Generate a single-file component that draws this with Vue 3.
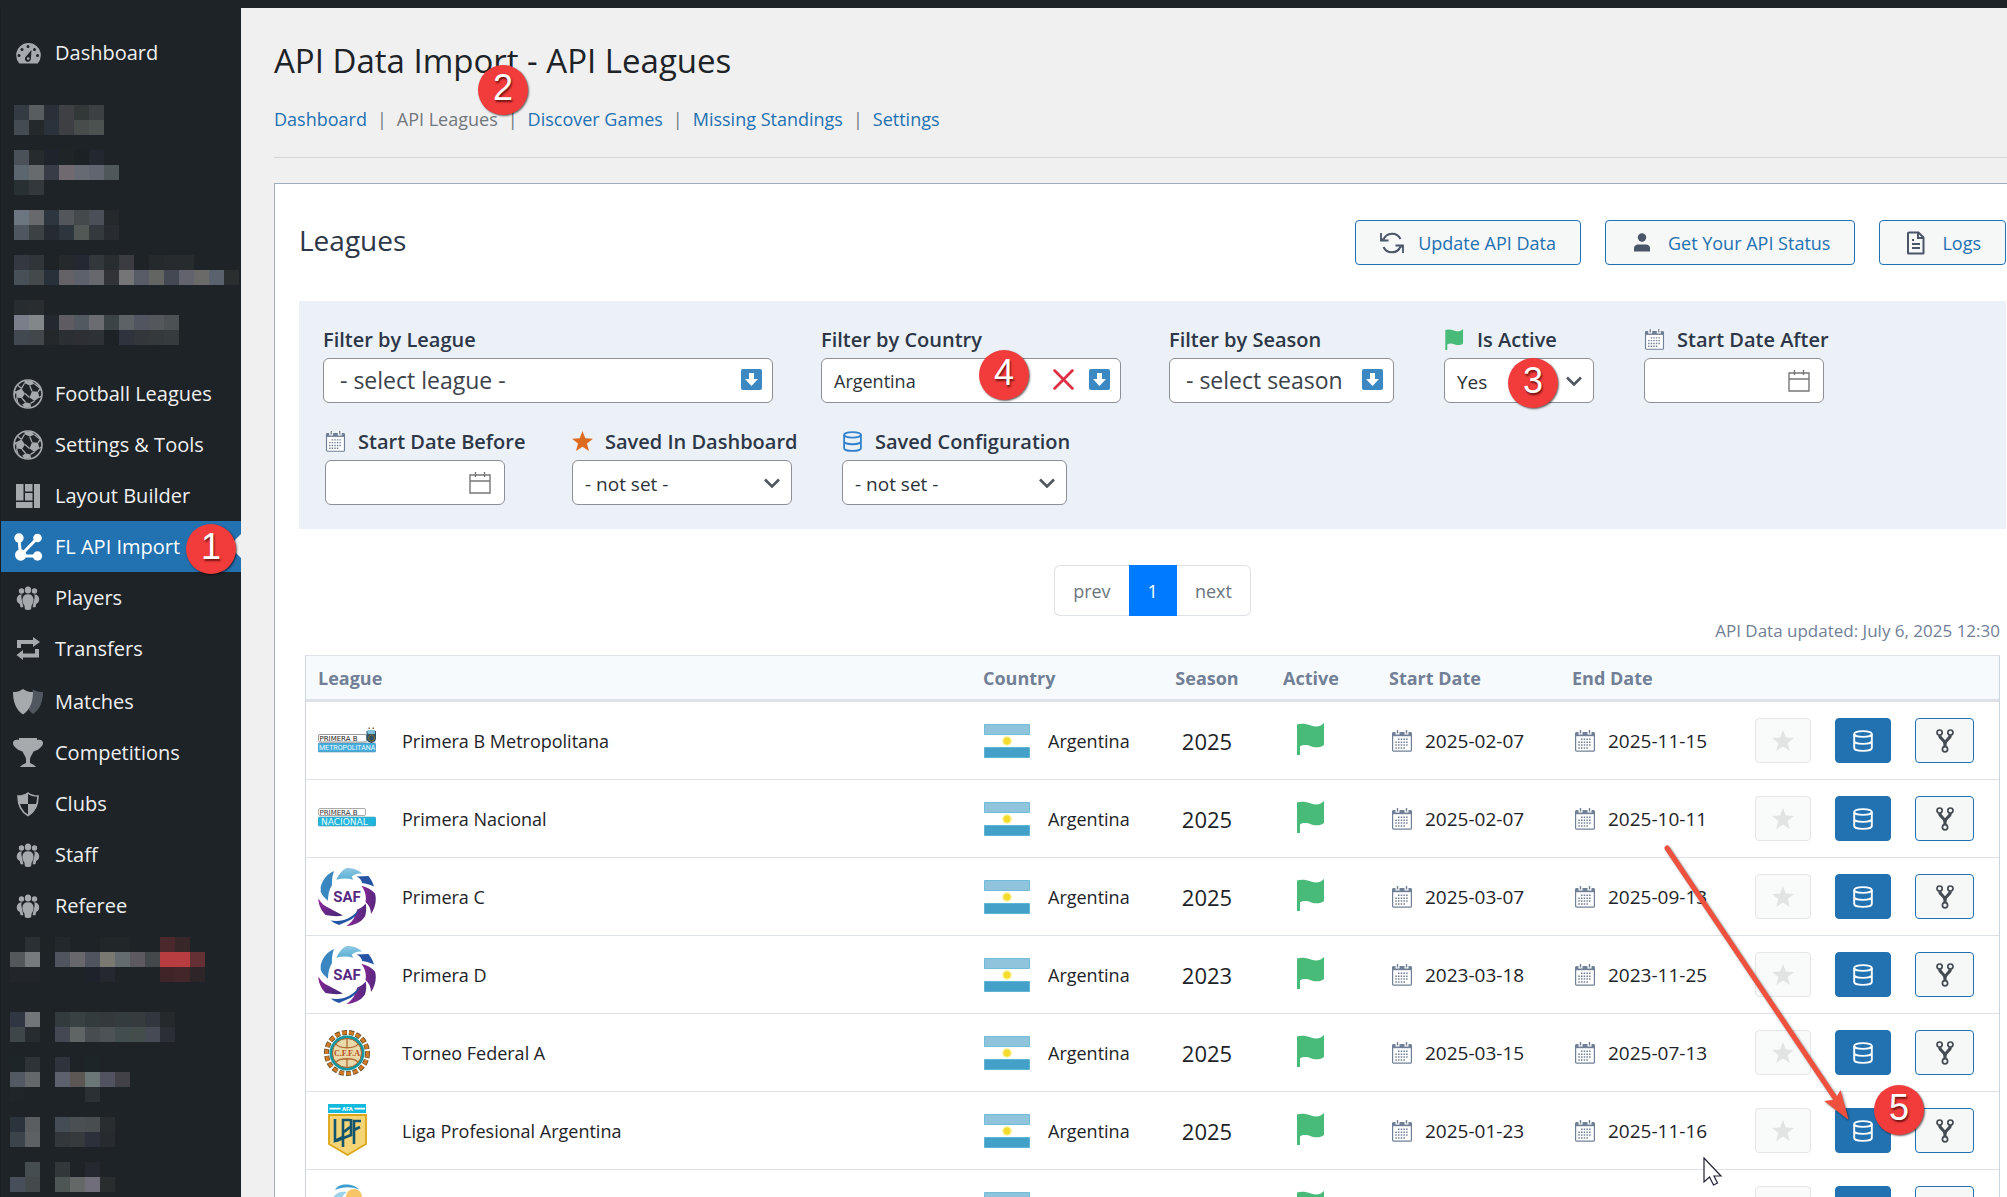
<template>
  <div class="page">
    <svg class="sprite" aria-hidden="true">
      <defs>
        <linearGradient id="g-sky" x1="0" y1="0" x2="0" y2="1">
          <stop offset="0" stop-color="#8fc9e3" />
          <stop offset="1" stop-color="#59aed4" />
        </linearGradient>
        <linearGradient id="g-purple" x1="0" y1="0" x2="1" y2="0">
          <stop offset="0" stop-color="#8a2797" />
          <stop offset="1" stop-color="#55287f" />
        </linearGradient>
        <linearGradient id="g-purple-rev" x1="0" y1="0" x2="1" y2="1">
          <stop offset="0" stop-color="#94249b" />
          <stop offset="1" stop-color="#3f2a76" />
        </linearGradient>
      </defs>

      <symbol id="i-dashboard" viewBox="0 0 30 30">
        <path fill="currentColor" d="M6.300 25.500A12.300 12.300 0 1 1 24.700 25.500Z" />
        <g fill="#1d2327">
          <circle cx="6" cy="17.500" r="1.500" /><circle cx="9" cy="11.500" r="1.500" />
          <circle cx="15" cy="8.500" r="1.500" /><circle cx="21.500" cy="11.500" r="1.500" />
          <circle cx="24.500" cy="17.500" r="1.500" />
          <path d="M18.500 12l-.6 8.600a3 3 0 1 1-4.700-2.300z" />
        </g>
        <circle cx="15.200" cy="20.600" r="1.300" fill="currentColor" />
      </symbol>
      <symbol id="i-ball" viewBox="0 0 30 30">
        <circle cx="15" cy="15" r="14" fill="none" stroke="currentColor" stroke-width="1.600" />
        <g fill="currentColor">
          <path d="M8.500 9.500l3.500 5-3 4.800-5.500-.8L3 12.300z" />
          <path d="M19 12.200l6 .6 1.300 5.700-4.800 3.500-5-3.600z" />
          <path d="M11.500 1.600L19 2l2.500 2.800-4.800 1.700-5.200-2.200z" />
          <path d="M12.500 23.200l5 1.200.5 4.200-6.500-.4-2.300-2.400z" />
          <path d="M4 21.500l3.500 4.800-3.800-3.600zM27.500 8l1.300 5.200-1.800-2.700z" />
        </g>
        <path fill="none" stroke="currentColor" stroke-width="1.300" d="M8.500 9.500l3-5.200M16.700 6.500l2.300 5.700M12 14.500l4.500 3.900M9 19.300l3.500 3.900M21.500 22l-4 2.400M25 12.800l2.300-3.500M21.500 4.800l6 4.700M3 12.300L1.200 16M3.500 18.500l1 4M26.300 18.500l1.900-1.500M8.500 9.500L5 6.500" />
      </symbol>
      <symbol id="i-layout" viewBox="0 0 30 30">
        <path fill="currentColor" d="M3 3h7.500v16.500H3zM12 3h7.500v7.500H12zM12 12h7.500v7.500H12zM21 3h6v24h-6zM3 21h16.500v6H3z" />
      </symbol>
      <symbol id="i-network" viewBox="0 0 30 30">
        <path fill="none" stroke="currentColor" stroke-width="3" d="M6 6.500l1.500 17M7.500 23.500L24 6.500M7.500 24H24" />
        <g fill="currentColor">
          <circle cx="6" cy="6" r="4.700" /><circle cx="24.500" cy="6" r="4.300" />
          <circle cx="7.700" cy="23" r="5.700" /><circle cx="24.500" cy="24" r="4.700" />
        </g>
      </symbol>
      <symbol id="i-groups" viewBox="0 0 30 30">
        <g fill="currentColor">
          <circle cx="8.500" cy="8" r="2.700" /><circle cx="21.500" cy="8" r="2.700" />
          <ellipse cx="15" cy="7" rx="3.200" ry="3.600" />
          <path d="M9.600 11.600C7 12 9 17 10.400 24.300H7.500L6.800 21c-5-2-3.300-9.500 1.200-9.500zM20.400 11.600c2.600.4.600 5.400-.8 12.700h2.900l.7-3.300c5-2 3.300-9.500-1.200-9.500z" />
          <path d="M15 11.300c7 0 6.500 8 3.600 11.200l-.5 3.800c-1.400 1-4.800 1-6.200 0l-.5-3.800C8.500 19.300 8 11.300 15 11.300z" />
        </g>
      </symbol>
      <symbol id="i-transfers" viewBox="0 0 30 30">
        <path fill="currentColor" d="M4 14V6h16V3l7 5-7 5v-3H8v4zM26 15v8.500H10V26l-6.500-5L10 16v3.500h12V15z" />
      </symbol>
      <symbol id="i-matches" viewBox="0 0 30 30">
        <path fill="#50575e" d="M20 2.500c3.500 2.200 6.500 2.500 10 2.500 0 9-2.500 17-10 22-2-1.500-3.500-3-4.500-5z" />
        <path fill="currentColor" d="M10 2c3.500 2.500 6.500 3 10 3 0 9-2.500 17.500-10 22.500C2.500 22.500 0 14 0 5c3.500 0 6.500-.5 10-3z" />
      </symbol>
      <symbol id="i-cup" viewBox="0 0 30 30">
        <path fill="currentColor" d="M6 0h18v2c3-1 6 0 6 3s-4 7-9.500 8.500C19 17 17.500 18 17 21v4c2 1 5 2 6 4H7c1-2 4-3 6-4v-4c-.5-3-2-4-3.500-7.500C4 12 0 8 0 5s3-4 6-3z" />
      </symbol>
      <symbol id="i-shield" viewBox="0 0 30 30">
        <path fill="none" stroke="currentColor" stroke-width="1.600" d="M15 4c3 2.500 6 3 10 3 0 7-2 15-10 19.500C7 22 5 14 5 7c4 0 7-.5 10-3z" />
        <path fill="currentColor" d="M15 4v11H6C5.200 12 5 9 5 7c4 0 7-.5 10-3zM15 15h9.200c-1 4.500-3.600 8.800-9.200 11.500z" />
      </symbol>

      <symbol id="i-calendar" viewBox="0 0 22 22">
        <rect x="1.600" y="2.600" width="18.800" height="18.600" rx="1" fill="#fff" stroke="#718096" stroke-width="1.200" />
        <path fill="#718096" d="M1.600 2.600h18.800v3.600H1.600z" />
        <path fill="#fff" d="M4.500 0h4v4.600h-4zM13.500 0h4v4.600h-4z" />
        <path fill="#718096" d="M5.800 0h1.400v3.600H5.800zM14.800 0h1.400v3.600h-1.400z" />
        <path fill="none" stroke="#718096" stroke-width="1.500" stroke-dasharray="1.500 1.200" d="M7 9.300h10.500M4.300 12.200h13.500M4.300 15.100h13.500M4.300 18h10.500" />
      </symbol>
      <symbol id="i-flag" viewBox="0 0 28 32">
        <path fill="#48bb78" d="M0 1.500C4 0 9 .5 14 2.500c5 1.800 9 1.500 13-2.500v22c-3 2.500-8 3-12.500 1.500C10 21.800 6 21.500 3 23.500V32H0z" />
      </symbol>
      <symbol id="i-star" viewBox="0 0 22 22">
        <path fill="currentColor" d="M11 0l2.900 7.600 8.100.4-6.300 5.100L17.800 21 11 16.600 4.200 21l2.100-7.900L0 8l8.100-.4z" />
      </symbol>
      <symbol id="i-db" viewBox="0 0 20 22">
        <g fill="none" stroke="currentColor" stroke-width="1.900">
          <ellipse cx="10" cy="4" rx="8.800" ry="2.900" />
          <path d="M1.200 4v14c0 1.600 3.900 2.900 8.800 2.900s8.800-1.300 8.800-2.900V4M1.200 11c0 1.600 3.900 2.900 8.800 2.900s8.800-1.300 8.800-2.900" />
        </g>
      </symbol>
      <symbol id="i-fork" viewBox="0 0 18 24">
        <path fill="none" stroke="currentColor" stroke-width="3.200" d="M3.600 6.500c.5 4 5.400 4 5.400 8.500v2M14.400 6.500c-.5 4-5.400 4-5.400 8.500" />
        <g fill="#f6f7f7" stroke="currentColor" stroke-width="1.700">
          <circle cx="3.600" cy="3.600" r="2.600" /><circle cx="14.400" cy="3.600" r="2.600" /><circle cx="9" cy="20.300" r="2.600" />
        </g>
      </symbol>
      <symbol id="i-refresh" viewBox="0 0 24 24">
        <path fill="none" stroke="currentColor" stroke-width="2" d="M3.500 8.500A9.300 9.300 0 0 1 20.500 8M20.500 15.500A9.300 9.300 0 0 1 3.500 16" />
        <path fill="none" stroke="currentColor" stroke-width="1.800" d="M1 2v7.500h7.500M23 22v-7.500h-7.500" />
        <path fill="currentColor" d="M1 6l3.500 3.500H1zM23 18l-3.500-3.500H23z" />
      </symbol>
      <symbol id="i-user" viewBox="0 0 24 24">
        <circle cx="12" cy="6.500" r="4.200" fill="currentColor" />
        <path fill="currentColor" d="M4 20.500V17c0-2 2-3.500 4-3.500h8c2 0 4 1.500 4 3.500v3.500z" />
      </symbol>
      <symbol id="i-file" viewBox="0 0 24 24">
        <path fill="none" stroke="currentColor" stroke-width="2" d="M5 1.500h9.500l5 5V22q0 .5-.5.500H4.500Q4 22.500 4 22V2.500q0-1 1-1zM14 1.500V7h5.500" />
        <path stroke="currentColor" stroke-width="2" d="M8 9h2M8 13h8M8 17h8" />
      </symbol>
      <symbol id="i-down" viewBox="0 0 21 21">
        <rect width="21" height="21" rx="2" fill="#3b88c3" />
        <path fill="#fff" d="M8 4h5v6h4l-6.500 7L4 10h4z" />
      </symbol>
      <symbol id="i-clear" viewBox="0 0 20 20">
        <path fill="none" stroke="#dd2e44" stroke-width="2.600" stroke-linecap="round" d="M1.500 1.500l17 17M18.500 1.500l-17 17" />
      </symbol>
      <symbol id="i-chevron" viewBox="0 0 16 10">
        <path fill="none" stroke="#50575e" stroke-width="2.600" d="M1 1.500l7 7 7-7" />
      </symbol>
      <symbol id="i-picker" viewBox="0 0 22 22">
        <path fill="none" stroke="#777" stroke-width="1.400" d="M1 3h20v18H1zM1 9h20M6.500 0v5M15.500 0v5" />
      </symbol>

      <symbol id="flag-ar" viewBox="0 0 46 34">
        <path fill="#fff" d="M0 0h46v34H0z" />
        <path fill="#90c3dc" stroke="#71bcd6" d="M.5.5h45v10H.500z" />
        <path fill="#43a0c8" stroke="#5eb4d3" d="M.5 23.500h45v10H.500z" />
        <circle cx="23" cy="17" r="5" fill="#fbf3a5" />
        <circle cx="23" cy="17" r="3.500" fill="#f5dc2c" />
      </symbol>
    </svg>

    <div class="topbar"></div>

    <div class="body">
      <aside class="sidebar">
        <ul class="menu">
          <li><a href="#" class="menu-item"><svg class="menu-icon"><use href="#i-dashboard" /></svg>Dashboard</a></li>
        </ul>
        <svg class="mosaic mosaic-top" width="225" height="240">
          <rect v-for="c in topCells" :key="c.key" :x="c.x" :y="c.y" width="15" height="15" :fill="c.fill" />
        </svg>
        <ul v-for="(group, g) in menu" :key="g" class="menu">
          <li v-for="item in group" :key="item.label">
            <a href="#" class="menu-item" :class="{ current: item.current }">
              <svg class="menu-icon"><use :href="'#i-' + item.icon" /></svg>{{ item.label }}
            </a>
          </li>
        </ul>
        <svg class="mosaic mosaic-bottom" width="195" height="255">
          <rect v-for="c in bottomCells" :key="c.key" :x="c.x" :y="c.y" width="15" height="15" :fill="c.fill" />
        </svg>
      </aside>

      <main class="content">
        <h1>API Data Import - API Leagues</h1>
        <nav class="subnav">
          <template v-for="(link, i) in links" :key="link">
            <span v-if="i" class="sep">|</span>
            <a href="#" :class="{ active: link === 'API Leagues' }">{{ link }}</a>
          </template>
        </nav>
        <hr>

        <section class="panel">
          <header class="panel-head">
            <h2>Leagues</h2>
            <div class="actions">
              <button class="btn"><svg class="btn-icon"><use href="#i-refresh" /></svg>Update API Data</button>
              <button class="btn"><svg class="btn-icon"><use href="#i-user" /></svg>Get Your API Status</button>
              <button class="btn"><svg class="btn-icon"><use href="#i-file" /></svg>Logs</button>
            </div>
          </header>

          <form class="filters" @submit.prevent>
            <div class="field w-league">
              <label for="league">Filter by League</label>
              <div class="control">
                <input id="league" class="combo" type="text" placeholder="- select league -">
                <button type="button" class="open" aria-label="Open"><svg><use href="#i-down" /></svg></button>
              </div>
            </div>
            <div class="field w-country">
              <label for="country">Filter by Country</label>
              <div class="control">
                <input id="country" v-model="country" class="combo chosen" type="text">
                <button type="button" class="clear" aria-label="Clear" @click="country = ''"><svg><use href="#i-clear" /></svg></button>
                <button type="button" class="open" aria-label="Open"><svg><use href="#i-down" /></svg></button>
              </div>
            </div>
            <div class="field w-season">
              <label for="season">Filter by Season</label>
              <div class="control">
                <input id="season" class="combo" type="text" placeholder="- select season">
                <button type="button" class="open" aria-label="Open"><svg><use href="#i-down" /></svg></button>
              </div>
            </div>
            <div class="field w-active has-icon">
              <label for="active"><svg class="label-icon"><use href="#i-flag" /></svg>Is Active</label>
              <div class="control">
                <select id="active"><option>Yes</option><option>No</option></select>
                <svg class="chevron"><use href="#i-chevron" /></svg>
              </div>
            </div>
            <div class="field w-after has-icon">
              <label for="after"><svg class="label-icon"><use href="#i-calendar" /></svg>Start Date After</label>
              <div class="control date">
                <input id="after" type="text">
                <svg class="picker"><use href="#i-picker" /></svg>
              </div>
            </div>
            <div class="field w-before has-icon">
              <label for="before"><svg class="label-icon"><use href="#i-calendar" /></svg>Start Date Before</label>
              <div class="control date">
                <input id="before" type="text">
                <svg class="picker"><use href="#i-picker" /></svg>
              </div>
            </div>
            <div class="field w-saved has-icon">
              <label for="saved"><svg class="label-icon orange"><use href="#i-star" /></svg>Saved In Dashboard</label>
              <div class="control">
                <select id="saved"><option>- not set -</option></select>
                <svg class="chevron"><use href="#i-chevron" /></svg>
              </div>
            </div>
            <div class="field w-config has-icon">
              <label for="config"><svg class="label-icon blue"><use href="#i-db" /></svg>Saved Configuration</label>
              <div class="control">
                <select id="config"><option>- not set -</option></select>
                <svg class="chevron"><use href="#i-chevron" /></svg>
              </div>
            </div>
          </form>

          <div class="pagination">
            <button>prev</button>
            <button class="on">1</button>
            <button>next</button>
          </div>

          <div class="updated">API Data updated: July 6, 2025 12:30</div>

          <table class="leagues">
            <colgroup>
              <col>
              <col class="c-country">
              <col class="c-season">
              <col class="c-active">
              <col class="c-date">
              <col class="c-date">
              <col class="c-tools">
            </colgroup>
            <thead>
              <tr>
                <th>League</th>
                <th>Country</th>
                <th class="center">Season</th>
                <th class="center">Active</th>
                <th>Start Date</th>
                <th>End Date</th>
                <th></th>
              </tr>
            </thead>
            <tbody>
              <tr v-for="row in rows" :key="row.name">
                <td>
                  <div class="cell league">
                    <svg class="logo" viewBox="0 0 58 58">
                      <g v-if="row.logo === 'metro'">
                        <rect x=".5" y="22.500" width="48" height="7.500" rx="1.500" fill="#fff" stroke="#999" />
                        <text x="1.500" y="29" class="wide" font-size="7" fill="#222">PRIMERA B</text>
                        <rect x="0" y="31" width="58" height="9" rx="1.500" fill="#45addb" stroke="#5a8fa8" stroke-width=".6" />
                        <text x="1" y="38.200" class="narrow" font-size="7" fill="#e9f7fd">METROPOLITANA</text>
                        <path fill="#2c5065" d="M48.500 19h9.500v8c0 2-2 3-4.700 4-2.800-1-4.800-2-4.800-4z" />
                        <path fill="#7fc0dd" d="M49.500 18h7.500v4h-7.500z" />
                        <circle cx="53.500" cy="26" r="3" fill="none" stroke="#8d6f33" />
                        <path fill="#8a6a3a" d="M50.500 15.500h1.500V17h-1.500zM54.500 15.500h1.500V17h-1.500z" />
                      </g>
                      <g v-else-if="row.logo === 'nacional'">
                        <rect x=".5" y="18.500" width="47" height="7" rx="1.500" fill="#fff" stroke="#aaa" />
                        <text x="1.500" y="24.600" class="wide" font-size="7" fill="#333">PRIMERA B</text>
                        <rect x="0" y="27" width="58" height="9" rx="1.500" fill="#1fb5dc" stroke="#5a9db0" stroke-width=".6" />
                        <text x="3" y="34.500" class="wide" font-size="9" fill="#e9f9fe">NACIONAL</text>
                      </g>
                      <g v-else-if="row.logo === 'saf'">
                        <path fill="url(#g-sky)" d="M18.300 11.700C21 6 24 2 28.700 0c5 0 10.500 1 15.500 5.500-4 0-7.500.5-10.500 3l1.500 3.200c-6-1.500-11-1.500-16.900 0z" />
                        <path fill="#2653a3" d="M38.500 8.500l12-.5c2.500 3 4.500 7 5.500 10.500-4-2-8-3-12-3.500 0-2.500-2-5-5.500-6.500z" />
                        <path fill="url(#g-purple)" d="M43.300 17.800C49 19 54 22 57 25.500c2 7 0 15-4 20.500 0-5-2-9-5.500-12 1-5 0-11-4.200-16.200z" />
                        <path fill="url(#g-purple)" d="M47.700 35.500c1 5 .5 9-.7 13-4 6-11 9-18.700 9.500 3-2 5.500-4 7.500-7.500l3.500-9c3-1 6-3 8.400-6z" />
                        <path fill="#2455a4" d="M12.700 52.500c4 .8 9 .5 13.300-.5 6-2 11-6 16-11-3 6-7 10-12 12l-9 4q-4-1-8.300-4.500z" />
                        <path fill="url(#g-purple-rev)" d="M.3 30.500C3 35 6 38 11 40l14 7.600c-6 1-12 .5-17.500-.6C3 42 .5 37 .3 30.500z" />
                        <path fill="#3a86c0" d="M2.700 19C5 11 9 6 16 3c-1.500 4-2.500 9-2 14-3 5-4 10-4 15.700-3-2.500-6-5-7.300-9z" />
                        <text x="29" y="34" class="narrow mid bold" font-size="15" fill="#55297f">SAF</text>
                      </g>
                      <g v-else-if="row.logo === 'cffa'">
                        <circle cx="29" cy="29" r="20.500" fill="none" stroke="#5d4a2c" stroke-width="5" stroke-dasharray="5 2" />
                        <circle cx="29" cy="29" r="20.500" fill="none" stroke="#d07a25" stroke-width="3.400" stroke-dasharray="4.600 2.400" />
                        <circle cx="29" cy="29" r="17.500" fill="#16979f" />
                        <circle cx="29" cy="29" r="14.500" fill="#ead9a8" stroke="#a5602c" stroke-width="1" />
                        <path fill="none" stroke="#b06a35" stroke-width="1.300" d="M29 14.500v9M29 34.500v9M18 20c3 5 19 5 22 0M18 38.500c3-5 19-5 22 0" />
                        <text x="29" y="32" class="slab mid bold" font-size="8" fill="#b5501f">C.F.F.A</text>
                      </g>
                      <g v-else-if="row.logo === 'lpf'">
                        <path fill="#14bade" d="M10 2h38v9H10z" />
                        <path fill="#fff" d="M11.500 5.700h11v1.800h-11zM36.500 5.700H47v1.800H36.500z" />
                        <text x="29.500" y="9" class="narrow mid bold" font-size="6" fill="#fff">AFA</text>
                        <path fill="#f5d476" stroke="#dba617" stroke-width="1.800" d="M11 13h37v29l-18.500 11L11 42z" />
                        <path fill="none" stroke="#14556e" stroke-width="2.600" d="M17 17v22l8-4M25 45V18h7M33 17v16l-15 6M26 30l6-5M36 42V19h7M36 28l6-3" />
                      </g>
                      <g v-else>
                        <path fill="#3a9fd0" d="M17 10C19 5 25 4 30 4.500c5 .5 10 3 11 5-8-3-16-3-24 .5z" />
                        <path fill="#9cd2ea" d="M14 20c3-8 10-9 15-8-5 3-8 10-8 20-5-3-8-8-7-12z" />
                        <circle cx="36" cy="17" r="8" fill="#f7c566" />
                        <path fill="#3a9fd0" d="M16 30c8 12 22 12 28 0-2 16-24 18-28 0z" />
                      </g>
                    </svg>
                    {{ row.name }}
                  </div>
                </td>
                <td>
                  <div class="cell country"><svg class="flag"><use href="#flag-ar" /></svg>Argentina</div>
                </td>
                <td class="center year">{{ row.season }}</td>
                <td class="center"><svg class="active-flag"><use href="#i-flag" /></svg></td>
                <td>
                  <div class="cell date-cell"><svg class="cal"><use href="#i-calendar" /></svg>{{ row.start }}</div>
                </td>
                <td>
                  <div class="cell date-cell"><svg class="cal"><use href="#i-calendar" /></svg>{{ row.end }}</div>
                </td>
                <td>
                  <div class="cell tools">
                    <button class="tool star" disabled aria-label="Save"><svg><use href="#i-star" /></svg></button>
                    <button class="tool db" aria-label="Configure"><svg><use href="#i-db" /></svg></button>
                    <button class="tool fork" aria-label="Map"><svg><use href="#i-fork" /></svg></button>
                  </div>
                </td>
              </tr>
            </tbody>
          </table>
        </section>
      </main>
    </div>

    <!-- numbered steps, arrow and pointer over the page -->
    <div class="marks">
      <svg class="arrow" width="190" height="275" viewBox="0 0 190 275">
        <path class="shaft" d="M4 4L172 254" />
        <path class="head" d="M183 272L177 250l-4 7-8 1z" />
      </svg>
      <svg class="cursor" width="20" height="30" viewBox="0 0 20 30">
        <path fill="#fff" stroke="#223" stroke-width="1.200" d="M1 1v24l5.500-5 4 8 4-2-3.500-7h7z" />
      </svg>
      <span v-for="n in 5" :key="n" class="step" :class="'step-' + n">{{ n }}</span>
    </div>
  </div>
</template>

<script setup>
import { ref } from 'vue';

const country = ref('Argentina');

const links = ['Dashboard', 'API Leagues', 'Discover Games', 'Missing Standings', 'Settings'];

const menu = [
  [
    { label: 'Football Leagues', icon: 'ball' },
    { label: 'Settings & Tools', icon: 'ball' },
    { label: 'Layout Builder', icon: 'layout' },
    { label: 'FL API Import', icon: 'network', current: true },
    { label: 'Players', icon: 'groups' },
    { label: 'Transfers', icon: 'transfers' }
  ],
  [
    { label: 'Matches', icon: 'matches' },
    { label: 'Competitions', icon: 'cup' },
    { label: 'Clubs', icon: 'shield' },
    { label: 'Staff', icon: 'groups' },
    { label: 'Referee', icon: 'groups' }
  ]
];

const rows = [
  { name: 'Primera B Metropolitana', logo: 'metro', season: 2025, start: '2025-02-07', end: '2025-11-15' },
  { name: 'Primera Nacional', logo: 'nacional', season: 2025, start: '2025-02-07', end: '2025-10-11' },
  { name: 'Primera C', logo: 'saf', season: 2025, start: '2025-03-07', end: '2025-09-13' },
  { name: 'Primera D', logo: 'saf', season: 2023, start: '2023-03-18', end: '2023-11-25' },
  { name: 'Torneo Federal A', logo: 'cffa', season: 2025, start: '2025-03-15', end: '2025-07-13' },
  { name: 'Liga Profesional Argentina', logo: 'lpf', season: 2025, start: '2025-01-23', end: '2025-11-16' },
  { name: 'Copa Argentina', logo: 'copa', season: 2025, start: '2025-01-15', end: '2025-11-30' }
];

// one string per 15px row, "." leaves a cell empty
const toCells = (lines) => lines.flatMap((line, y) =>
  line.split(' ').map((c, x) => ({ key: x + '-' + y, x: x * 15, y: y * 15, fill: '#' + c }))
).filter((c) => /^#\w{6}$/.test(c.fill));

const topCells = toCells([
  '343b42 585e60 2a2f38 3e4043 323738 3c4042',
  '444c52 24292b 2a323b 3d3f42 484c4b 4c5250',
  '',
  '4a5158 262b2d 1e232c 1f2427 1c2125 23272f',
  '5c666f 686b6d 383c47 706a70 666a73 60656f 50575a',
  '293033 33383c',
  '',
  '6b7681 67696d 2d353f 53565b 444a4b 4b4f58 25292c',
  '4e575f 3c4144 252a33 2c363c 525856 34393e 282b2f',
  '',
  '343941 303539 . 25292b 242833 32373b 292d30 3a3c41 . 25292b 282b2d 282b2d',
  '485057 444a4c 28313a 646167 5c616b 67686d 313339 757476 575c66 636563 434852 62636d 6a6a69 5a636d 2a2e2e',
  '',
  '262c2f 292d30',
  '7a7e8b 828789 24292f 5e5c62 525960 6b6c72 3c4347 5c6265 505560 54585d 4c5254',
  '434950 42474b 24282b 2b2f33 2d2f35 2e3237 1d2226 2e333d 33363b 34393c 363b3d'
]);

const bottomCells = toCells([
  '. 2b3034 1e2326 23282c . . 212629 212629 . . 4b282b 382729',
  '54585b 787b7d . 50545f 67676c 50545f 797972 646c6f 5d5960 44484b b83d40 b83d40 653033',
  '22262a 22262a . . . 1e222b 25282e . . . 402528 42262a 2e2528',
  '',
  '',
  '303742 727678 1e2326 343b3e 3a4143 343b3c 34393b 343c3f 363c3e 32363f 25292c',
  '3f464a 272c30 . 444853 5f6564 464c50 4d5256 424d50 434d4b 464a55 2b2e34',
  '',
  '1e2528 2e3337 . 2e333c . 1d2529',
  '525963 64686b . 5d616e 5c5654 6b7677 525361 424147',
  '202529 . . . . 2b3035',
  '. 1e2327',
  '2b343c 5a5e61 . 444d56 4a4f54 484d50 2a2d30',
  '3b444a 5e6164 . 32373b 363a3c 2b303a 272b2f',
  '',
  '. 454d50 . 32373a . 26282f',
  '464f5a 44494c . 4e5655 646968 6f6e7a 2a2d2e'
]);
</script>

<style>
body {
  background: #f0f0f1;
}
</style>

<style scoped>
.page {
  position: relative;
  height: 100vh;
  overflow: hidden;
  display: flex;
  flex-direction: column;
  font-family: "Open Sans", "Noto Sans", sans-serif;
  font-size: 18px;
  color: #1d2327;
  background: #f0f0f1;
}
.page *, .page *::before, .page *::after {
  box-sizing: border-box;
}
.sprite {
  position: absolute;
  width: 0; height: 0;
}
button, input, select {
  font: inherit;
  color: inherit;
  margin: 0;
}
.topbar {
  height: 8px;
  flex: none;
  background: #1d2327;
}
.body {
  flex: 1;
  min-height: 0;
  display: flex;
}

/* sidebar */
.sidebar {
  width: 241px;
  flex: none;
  padding-top: 19px;
  background: #1d2327;
  border-left: 1px solid #191e22;
}
.menu {
  list-style: none;
  margin: 0 0 2px;
  padding: 0;
}
.menu-item {
  position: relative;
  display: flex;
  align-items: center;
  gap: 12px;
  height: 51px;
  padding-left: 12px;
  font-size: 20px;
  color: #f0f0f1;
  text-decoration: none;
  white-space: nowrap;
}
.menu-icon {
  width: 30px; height: 30px;
  flex: none;
  color: #a7aaad;
}
.current {
  background: #2271b1;
  color: #fff;
}
.current .menu-icon {
  color: #fff;
}
.current::after {
  content: "";
  position: absolute;
  right: 0; top: 13px;
  border: 12px solid transparent;
  border-left: 0;
  border-right-color: #f0f0f1;
}
.mosaic {
  display: block;
}
.mosaic-top {
  margin: 27px 0 23px 13px;
}
.mosaic-bottom {
  margin: 6px 0 0 9px;
}

/* content */
.content {
  flex: 1;
  min-width: 0;
  padding: 33px 0 0 33px;
}
h1 {
  margin: 0;
  font-size: 33px;
  line-height: 40px;
  font-weight: 400;
}
.subnav {
  display: flex;
  gap: 10px;
  margin-top: 24px;
  line-height: 28px;
}
.subnav a {
  color: #2271b1;
  text-decoration: none;
}
.subnav a.active, .sep {
  color: #72777c;
}
hr {
  height: 1px;
  margin: 24px 0 25px;
  border: 0;
  background: #d5d7da;
}
.panel {
  margin-right: -24px;
  padding: 36px 24px 24px;
  background: #fff;
  border: 1px solid #a0aec0;
}
.panel-head {
  display: flex;
  justify-content: space-between;
  align-items: flex-start;
  margin-bottom: 36px;
}
h2 {
  margin: 0;
  font-size: 28px;
  line-height: 40px;
  font-weight: 400;
  color: #2d3748;
}
.actions {
  display: flex;
  gap: 24px;
}
.btn {
  display: flex;
  align-items: center;
  gap: 14px;
  height: 45px;
  padding: 0 24px;
  color: #2271b1;
  background: #f6f7f7;
  border: 1px solid #2271b1;
  border-radius: 4px;
}
.btn-icon {
  width: 24px; height: 24px;
  color: #4a5568;
}

/* filters */
.filters {
  display: flex;
  flex-wrap: wrap;
  gap: 25px 48px;
  padding: 25px 24px 24px;
  background: #ebf1f6;
}
.has-icon {
  padding-left: 2px;
}
.field label {
  display: flex;
  align-items: center;
  gap: 12px;
  height: 26px;
  margin-bottom: 6px;
  font-size: 20px;
  font-weight: 600;
  color: #2d3748;
  white-space: nowrap;
}
.label-icon {
  width: 21px; height: 21px;
  flex: none;
}
.orange { color: #dd6b20; }
.blue { color: #3182ce; }
.w-league { width: 450px; }
.w-country { width: 300px; }
.w-season { width: 225px; }
.w-active { width: 152px; }
.w-after { width: 182px; }
.w-before { width: 199px; }
.w-saved { width: 222px; }
.w-config { width: 227px; }
.control {
  position: relative;
}
.date {
  width: 180px;
}
.control input, .control select {
  display: block;
  width: 100%;
  height: 45px;
  padding: 0 12px;
  color: #2c3338;
  background: #fff;
  border: 1px solid #8c8f94;
  border-radius: 6px;
  appearance: none;
}
.control select {
  padding-top: 2px;
  font-size: 19px;
}
.control input.combo {
  padding: 0 36px 2px 16px;
  font-size: 23px;
}
.control input.chosen {
  padding: 0 80px 0 12px;
  font-size: 18px;
}
.combo::placeholder {
  color: #3c434a;
  opacity: 1;
}
.open, .clear {
  position: absolute;
  top: 11px; right: 11px;
  width: 21px; height: 21px;
  padding: 0;
  border: 0;
  background: none;
}
.clear {
  right: 47px;
}
.open svg, .clear svg {
  display: block;
  width: 100%; height: 100%;
}
.chevron {
  position: absolute;
  right: 12px; top: 18px;
  width: 16px; height: 10px;
  pointer-events: none;
}
.picker {
  position: absolute;
  right: 14px; top: 12px;
  width: 22px; height: 22px;
}

.pagination {
  display: flex;
  justify-content: center;
  margin-top: 36px;
}
.pagination button {
  height: 51px;
  padding: 0 18px;
  background: #fff;
  border: 1px solid #dee2e6;
  color: #6c757d;
}
.pagination button:first-child {
  border-right: 0;
  border-radius: 6px 0 0 6px;
}
.pagination button:last-child {
  border-left: 0;
  border-radius: 0 6px 6px 0;
}
.pagination .on {
  color: #fff;
  background: #007bff;
  border-color: #007bff;
}
.updated {
  margin: 5px 6px 14px;
  font-size: 17px;
  line-height: 20px;
  text-align: right;
  color: #718096;
}

/* table */
.leagues {
  width: calc(100% - 12px);
  margin: 0 6px;
  table-layout: fixed;
  border-collapse: separate;
  border-spacing: 0;
  border: 1px solid #cbd5e0;
  border-top-color: #dee2e6;
}
.c-country { width: 198px; }
.c-season { width: 76px; }
.c-active { width: 132px; }
.c-date { width: 183px; }
.c-tools { width: 256px; }
.leagues th {
  height: 46px;
  padding: 0 0 0 12px;
  text-align: left;
  font-weight: 700;
  color: #718096;
  background: #f7fafc;
  border-bottom: 3px solid #dee2e6;
}
.leagues td {
  height: 78px;
  padding: 0 0 0 12px;
  border-bottom: 1px solid #dee2e6;
}
.leagues .center {
  padding: 0;
  text-align: center;
}
.cell {
  display: flex;
  align-items: center;
  white-space: nowrap;
}
.league { gap: 26px; }
.country { gap: 18px; }
.logo {
  width: 58px; height: 58px;
}
.wide {
  font-family: "DejaVu Sans", sans-serif;
}
.narrow {
  font-family: Roboto, sans-serif;
}
.slab {
  font-family: "Liberation Serif", serif;
}
.mid {
  text-anchor: middle;
}
.bold {
  font-weight: 700;
}
.flag {
  width: 46px; height: 34px;
  margin-left: 1px;
}
.leagues .year {
  font-size: 22px;
}
.active-flag {
  display: inline-block;
  width: 28px; height: 32px;
  margin-bottom: 4px;
  vertical-align: middle;
}
.date-cell {
  gap: 12px;
  padding-left: 2px;
  font-size: 19px;
}
.cal {
  width: 22px; height: 22px;
}
.tools { gap: 24px; }
.tool {
  display: flex;
  align-items: center;
  justify-content: center;
  width: 56px; height: 45px;
  padding: 0;
  background: #f6f7f7;
  border: 1px solid #2271b1;
  border-radius: 4px;
}
.tool svg {
  width: 22px; height: 22px;
}
.star {
  color: #e2e4e4;
  background: #f9fafa;
  border-color: #e4e6e7;
}
.db {
  color: #fff;
  background: #2271b1;
}
.fork {
  width: 59px;
  color: #444b52;
}
.fork svg {
  width: 18px; height: 24px;
}

/* marks */
.marks {
  position: absolute;
  inset: 0;
  pointer-events: none;
}
.arrow {
  position: absolute;
  left: 1663px; top: 844px;
  filter: drop-shadow(1px 1px 1px rgba(0, 0, 0, 0.5));
}
.shaft {
  fill: none;
  stroke: #f0503e;
  stroke-width: 5px;
  stroke-linecap: round;
}
.head {
  fill: #f0503e;
  stroke: #f0503e;
  stroke-width: 3px;
}
.cursor {
  position: absolute;
  left: 1703px; top: 1157px;
}
.step {
  position: absolute;
  width: 50px; height: 50px;
  border-radius: 50%;
  background: #f23b3b;
  box-shadow: 1px 1px 2px rgba(0, 0, 0, 0.6);
  color: #fff;
  font-family: "Liberation Sans", sans-serif;
  font-size: 36px;
  line-height: 46px;
  text-align: center;
  text-shadow: 1px 2px 2px rgba(60, 0, 0, 0.7);
}
.step-1 { left: 186px; top: 524px; }
.step-2 { left: 478px; top: 65px; }
.step-3 { left: 1508px; top: 358px; }
.step-4 { left: 979px; top: 350px; }
.step-5 { left: 1874px; top: 1085px; }
</style>
